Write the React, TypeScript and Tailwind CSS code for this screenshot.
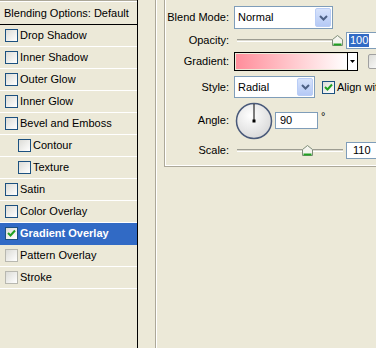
import React from 'react';

const font = { fontFamily: '"Liberation Sans", Arial, sans-serif' };

const CheckBox: React.FC<{ checked?: boolean; muted?: boolean }> = ({ checked, muted }) => (
  <span
    className={`inline-flex h-[13px] w-[13px] shrink-0 items-center justify-center border ${
      muted ? 'border-[#b8b8b0]' : 'border-[#1c5180]'
    } bg-gradient-to-br from-[#dcdcd7] to-white`}
  >
    {checked && (
      <svg width="9" height="9" viewBox="0 0 9 9">
        <path d="M1 4 L3.5 6.5 L8 1.5" stroke="#21a121" strokeWidth="2" fill="none" />
      </svg>
    )}
  </span>
);

const Chevron: React.FC = () => (
  <span className="flex h-full w-[16px] items-center justify-center rounded-[2px] bg-gradient-to-b from-[#d7e3fb] to-[#b5c9f5] border border-[#b9cdf6]">
    <svg width="9" height="6" viewBox="0 0 9 6">
      <path d="M1 1 L4.5 4.5 L8 1" stroke="#4d6185" strokeWidth="2" fill="none" />
    </svg>
  </span>
);

const Thumb: React.FC = () => (
  <svg width="11" height="11" viewBox="0 0 11 11" className="shrink-0">
    <path d="M0.5 4.5 L5.5 0.5 L10.5 4.5 L10.5 10.5 L0.5 10.5 Z" fill="#f4f4ee" stroke="#7d8c78" />
    <path d="M1.5 9.5 L9.5 9.5" stroke="#21a121" strokeWidth="2" />
  </svg>
);

const Slider: React.FC<{ pos: number }> = ({ pos }) => (
  <div className="flex h-[11px] w-[106px] items-center">
    <div className="h-[3px] border-t border-[#9d9d92] border-b border-b-white bg-[#dcdad0]" style={{ width: pos }} />
    <Thumb />
    <div className="h-[3px] flex-1 border-t border-[#9d9d92] border-b border-b-white bg-[#dcdad0]" />
  </div>
);

const rows: Array<{ label: string; indent?: boolean; checked?: boolean }> = [
  { label: 'Drop Shadow' },
  { label: 'Inner Shadow' },
  { label: 'Outer Glow' },
  { label: 'Inner Glow' },
  { label: 'Bevel and Emboss' },
  { label: 'Contour', indent: true },
  { label: 'Texture', indent: true },
  { label: 'Satin' },
  { label: 'Color Overlay' },
  { label: 'Gradient Overlay', checked: true },
  { label: 'Pattern Overlay' },
  { label: 'Stroke' },
];

const Label: React.FC<{ text: string }> = ({ text }) => (
  <span className="w-[65px] shrink-0 pr-[2px] text-right">{text}</span>
);

export default function App() {
  return (
    <div className="flex h-[348px] w-[376px] overflow-hidden bg-[#ece9d8] text-[11px] text-black" style={font}>
      {/* styles list */}
      <div className="flex h-full w-[138px] shrink-0 flex-col border-r border-black">
        <div className="h-[1px] bg-[#aca899]" />
        <div className="h-[1px] bg-white" />
        <div className="flex h-[23px] items-center border-b border-black pl-[4px]">Blending Options: Default</div>
        {rows.map(r => (
          <div
            key={r.label}
            className={`flex h-[22px] items-center gap-[2px] border-b ${
              r.checked ? 'border-[#316ac5] bg-[#316ac5] font-bold text-white' : 'border-white'
            } ${r.indent ? 'pl-[18px]' : 'pl-[5px]'}`}
          >
            <CheckBox checked={r.checked} muted={r.label === 'Pattern Overlay' || r.label === 'Stroke'} />
            <span>{r.label}</span>
          </div>
        ))}
      </div>

      {/* outer frame line */}
      <div className="ml-[17px] flex h-full">
        <div className="w-px bg-[#aca899]" />
        <div className="w-px bg-white" />
      </div>

      {/* gradient group box */}
      <div className="ml-[7px] flex h-[167px] w-[240px] shrink-0 border-b border-l border-[#aca899]">
        <div className="flex w-full flex-col border-b border-l border-white pb-[5px]">
          <div className="flex h-[3px] items-end overflow-hidden pl-[16px]">
            <span className="font-bold leading-[13px] text-[#0046d5]">Gradient</span>
          </div>

          <div className="mt-[3px] flex h-[23px] items-center gap-[3px]">
            <Label text="Blend Mode:" />
            <div className="flex h-full w-[99px] items-center border border-[#7f9db9] bg-white pl-[3px] pr-[1px] py-[1px]">
              <span className="flex-1">Normal</span>
              <Chevron />
            </div>
          </div>

          <div className="mt-[3px] flex h-[17px] items-center gap-[3px]">
            <Label text="Opacity:" />
            <div className="flex h-full w-[109px] items-center pl-[3px]">
              <Slider pos={96} />
            </div>
            <div className="flex h-full w-[40px] shrink-0 items-center border border-[#7f9db9] bg-white pl-[2px]">
              <span className="bg-[#316ac5] px-[1px] leading-[13px] text-white">100</span>
            </div>
          </div>

          <div className="mt-[3px] flex h-[19px] items-center gap-[3px]">
            <Label text="Gradient:" />
            <div className="flex h-full w-[124px] shrink-0 border border-black">
              <div className="flex-1 border border-[#ece9d8] border-r-0 bg-gradient-to-r from-[#ff8d9b] to-white" />
              <div className="flex w-[10px] items-center justify-center border-l border-black bg-white">
                <svg width="5" height="3" viewBox="0 0 5 3">
                  <path d="M0 0 L5 0 L2.5 3 Z" fill="#000" />
                </svg>
              </div>
            </div>
            <span className="ml-[7px] h-[15px] w-[14px] shrink-0 rounded-[2px] border border-[#a0a0a0] bg-gradient-to-br from-[#dcdcd7] to-white" />
          </div>

          <div className="mt-[5px] flex h-[22px] items-center gap-[3px]">
            <Label text="Style:" />
            <div className="flex h-full w-[81px] shrink-0 items-center border border-[#7f9db9] bg-white pl-[3px] pr-[1px] py-[1px]">
              <span className="flex-1">Radial</span>
              <Chevron />
            </div>
            <div className="ml-[4px] flex items-center gap-[2px] whitespace-nowrap">
              <CheckBox checked />
              <span>Align with Layer</span>
            </div>
          </div>

          <div className="mt-[4px] flex h-[37px] items-center gap-[3px]">
            <Label text="Angle:" />
            <svg width="38" height="38" viewBox="0 0 38 38" className="ml-[1px] shrink-0">
              <defs>
                <radialGradient id="dialg" cx="40%" cy="35%" r="70%">
                  <stop offset="0%" stopColor="#ffffff" />
                  <stop offset="100%" stopColor="#d8d8d8" />
                </radialGradient>
              </defs>
              <circle cx="19" cy="19" r="17.5" fill="url(#dialg)" stroke="#4a5a7a" strokeWidth="1.5" />
              <line x1="19" y1="19" x2="19" y2="2" stroke="#000" strokeWidth="1" />
              <rect x="17.5" y="17.5" width="3" height="3" fill="#000" />
            </svg>
            <div className="flex h-[17px] w-[43px] shrink-0 items-center border border-[#7f9db9] bg-white pl-[4px] -ml-[1px]">90</div>
            <span className="-mt-[8px]">°</span>
          </div>

          <div className="mt-[3px] flex h-[17px] items-center gap-[3px]">
            <Label text="Scale:" />
            <div className="flex h-full w-[109px] items-center pl-[3px]">
              <Slider pos={65} />
            </div>
            <div className="flex h-full w-[40px] shrink-0 items-center border border-[#7f9db9] bg-white pl-[6px]">110</div>
          </div>
        </div>
      </div>
    </div>
  );
}
